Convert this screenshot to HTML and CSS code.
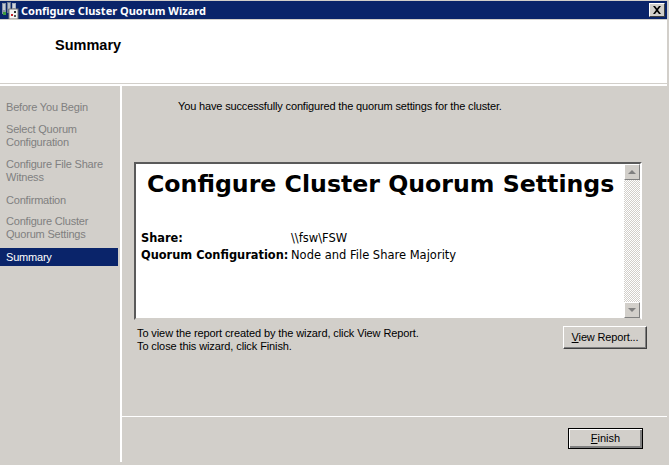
FILE: index.html
```html
<!DOCTYPE html>
<html lang="en">
<head>
  <meta charset="UTF-8" />
  <title>Configure Cluster Quorum Wizard</title>
  <link rel="stylesheet" href="styles.css">
</head>
<body>
  <div class="wizard">
    <div class="titlebar">
      <svg class="app-icon" width="18" height="17" viewBox="0 0 18 17">
        <rect x="1" y="1" width="4" height="11" fill="#8a94a6"/>
        <rect x="6" y="0" width="4" height="11" fill="#6f7b90"/>
        <rect x="11" y="1" width="4" height="8" fill="#a4adbc"/>
        <path d="M2 3h2M2 5h2M2 7h2M7 2h2M7 4h2M7 6h2M12 3h2M12 5h2" stroke="#fff" stroke-width="1"/>
        <rect x="2" y="10" width="3" height="3" fill="#3f9a3f"/>
        <rect x="8" y="7" width="9" height="10" fill="#f4f4f4" stroke="#777" stroke-width="1"/>
        <rect x="10" y="12" width="2" height="2" fill="#c8232c"/>
        <rect x="13" y="9" width="2" height="2" fill="#333"/>
        <rect x="13" y="13" width="2" height="2" fill="#555"/>
      </svg>
      <span class="title-text">Configure Cluster Quorum Wizard</span>
      <button class="close-btn" aria-label="Close">
        <svg width="10" height="8" viewBox="0 0 10 8">
          <path d="M1 0h2l2 2.500 2-2.500h2l-3 4 3 4h-2l-2-2.500-2 2.500h-2l3-4z" fill="#000"/>
        </svg>
      </button>
    </div>

    <div class="header">
      <h1>Summary</h1>
    </div>

    <div class="content">
      <div class="sidebar">
        <div class="step">Before You Begin</div>
        <div class="step">Select Quorum Configuration</div>
        <div class="step">Configure File Share Witness</div>
        <div class="step step-confirm">Confirmation</div>
        <div class="step">Configure Cluster Quorum Settings</div>
        <div class="step active">Summary</div>
      </div>

      <div class="main">
        <div class="main-top">
          <p class="success">You have successfully configured the quorum settings for the cluster.</p>

          <div class="report">
            <div class="report-body">
              <h2>Configure Cluster Quorum Settings</h2>
              <div class="report-row"><strong>Share:</strong><span>\\fsw\FSW</span></div>
              <div class="report-row"><strong>Quorum Configuration:</strong><span>Node and File Share Majority</span></div>
            </div>
            <div class="scrollbar">
              <div class="scroll-btn"><span class="arrow-up"></span></div>
              <div class="scroll-track"></div>
              <div class="scroll-btn"><span class="arrow-down"></span></div>
            </div>
          </div>

          <div class="report-actions">
            <p class="hint">To view the report created by the wizard, click View Report.<br>To close this wizard, click Finish.</p>
            <button class="btn view-btn"><u>V</u>iew Report...</button>
          </div>
        </div>

        <div class="footer">
          <button class="btn finish-btn"><u>F</u>inish</button>
        </div>
      </div>
    </div>
  </div>
</body>
</html>
```

FILE: styles.css
```css
html, body {
  margin: 0;
  padding: 0;
  height: 100%;
  overflow: hidden;
  background-color: #d2cfca;
}

body {
  font-family: "Liberation Sans", Arial, sans-serif;
  font-size: 11px;
  color: #000;
}

.wizard {
  width: 667px;
  height: 462px;
  padding-top: 1px;
  box-sizing: border-box;
  display: flex;
  flex-direction: column;
}

.titlebar {
  height: 18px;
  background-color: #0a246a;
  display: flex;
  align-items: center;
  color: #fff;
  font-family: "Noto Sans", sans-serif;
  font-weight: bold;
  font-size: 11px;
  padding-left: 1px;
  padding-right: 2px;
  box-sizing: border-box;
  flex-shrink: 0;
}

.app-icon {
  margin-right: 2px;
  flex-shrink: 0;
}

.title-text {
  flex: 1;
}

.close-btn {
  width: 16px;
  height: 14px;
  padding: 0;
  background-color: #d2cfca;
  border: 1px solid;
  border-color: #fff #404040 #404040 #fff;
  display: flex;
  align-items: center;
  justify-content: center;
}

.header {
  height: 63px;
  margin-top: 1px;
  background-color: #fff;
  border-bottom: 1px solid #d2cfca;
  flex-shrink: 0;
}

.header h1 {
  margin: 0;
  padding: 17px 0 0 55px;
  font-size: 14.5px;
  line-height: 16px;
  font-weight: bold;
}

.content {
  flex: 1;
  display: flex;
  border-top: 2px solid #fff;
  min-height: 0;
}

.sidebar {
  width: 120px;
  padding-top: 15px;
  border-right: 2px solid #fff;
  flex-shrink: 0;
}

.step {
  color: #808080;
  padding: 0 6px;
  line-height: 13px;
  margin-bottom: 9px;
  letter-spacing: -0.2px;
}

.step-confirm {
  margin-top: 10px;
  margin-bottom: 8px;
}

.step.active {
  background-color: #0a246a;
  color: #fff;
  line-height: 18px;
  margin-top: -2px;
  width: 118px;
  box-sizing: border-box;
}

.main {
  flex: 1;
  display: flex;
  flex-direction: column;
  min-width: 0;
}

.main-top {
  flex: 1;
  padding-left: 12px;
}

.success {
  margin: 13px 0 0 44px;
  line-height: 14px;
  letter-spacing: -0.15px;
}

.report {
  margin-top: 49px;
  height: 154px;
  width: 504px;
  display: flex;
  background-color: #fff;
  border: 2px solid;
  border-color: #5a5a5a #fff #d2cfca #5a5a5a;
}

.report-body {
  flex: 1;
  font-family: "DejaVu Sans", sans-serif;
  font-size: 11.5px;
  padding-left: 5px;
  min-width: 0;
}

.report-body h2 {
  margin: 3px 0 29px;
  font-size: 23.65px;
  line-height: 34px;
  font-weight: bold;
  white-space: nowrap;
  padding-left: 6px;
}

.report-row {
  display: flex;
  line-height: 17px;
}

.report-row strong {
  width: 150px;
  flex-shrink: 0;
  font-size: 11.4px;
}

.scrollbar {
  width: 16px;
  display: flex;
  flex-direction: column;
  flex-shrink: 0;
}

.scroll-btn {
  height: 16px;
  background-color: #d2cfca;
  border: 1px solid;
  border-color: #fff #808080 #808080 #fff;
  box-sizing: border-box;
  display: flex;
  align-items: center;
  justify-content: center;
}

.scroll-track {
  flex: 1;
  background-image: repeating-conic-gradient(#d2cfca 0 25%, #fff 0 50%);
  background-size: 2px 2px;
}

.arrow-up {
  border-left: 4px solid transparent;
  border-right: 4px solid transparent;
  border-bottom: 4px solid #808080;
}

.arrow-down {
  border-left: 4px solid transparent;
  border-right: 4px solid transparent;
  border-top: 4px solid #808080;
}

.report-actions {
  display: flex;
  justify-content: space-between;
  width: 513px;
  margin-top: 6px;
}

.hint {
  margin: 1px 0 0 3px;
  line-height: 13px;
  letter-spacing: -0.1px;
}

.btn {
  font-family: "Liberation Sans", Arial, sans-serif;
  font-size: 11px;
  color: #000;
  background-color: #d2cfca;
  padding: 0 0 1px;
  box-sizing: border-box;
  border: 1px solid;
  border-color: #fff #404040 #404040 #fff;
  box-shadow: inset -1px -1px 0 #808080;
}

.view-btn {
  width: 84px;
  height: 23px;
  letter-spacing: -0.15px;
}

.footer {
  height: 34px;
  border-top: 1px solid #fff;
  display: flex;
  justify-content: flex-end;
  padding: 11px 24px 0 0;
  flex-shrink: 0;
}

.finish-btn {
  width: 75px;
  height: 21px;
  border: 1px solid #000;
  box-shadow: inset 1px 1px 0 #fff, inset -2px -2px 0 #808080;
}
```
